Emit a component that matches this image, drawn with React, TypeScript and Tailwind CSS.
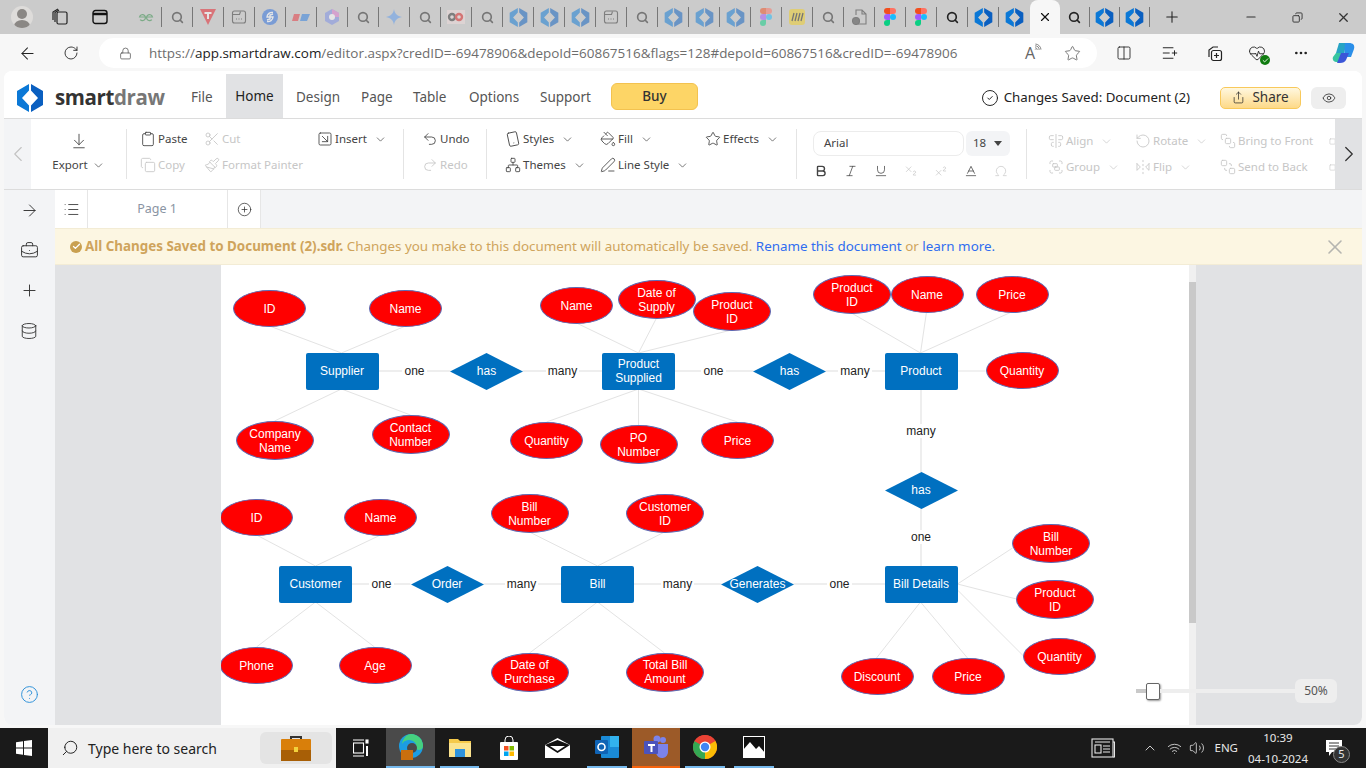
import React from "react";
import {
  ArrowLeft, RotateCw, Lock, Search, Star, Plus, X, Minus, MoreHorizontal, ChevronDown, ChevronLeft, ChevronRight,
  ArrowDownToLine, Clipboard, Scissors, Copy, Paintbrush, SquareArrowDownRight, Undo2, Redo2, Smartphone, Network, PaintBucket, PenLine,
  Bold, Italic, Underline, Subscript, Superscript, Baseline, Omega, AlignCenterVertical, RotateCcw, Group, FlipHorizontal2, BringToFront, SendToBack,
  CircleCheck, Share, Eye, List, CirclePlus, ArrowRight, BriefcaseBusiness, Database, CircleHelp, Columns2, ListPlus, Plus as PlusIcon, HeartPulse, Wifi, Volume2, ChevronUp, Check, Copy as CopyIcon, Square,
} from "lucide-react";

const Logo = ({ s = 20 }: { s?: number }) => (
  <svg width={s} height={s} viewBox="0 0 28 28">
    <polygon points="13,0 1,7 1,21 13,28 13,21.500 6,14 13,6.500" fill="#0b78d6" />
    <polygon points="15,0 27,7 27,21 15,28 15,21.500 22,14 15,6.500" fill="#0a5fc0" />
  </svg>
);

const WinDots = () => (
  <svg width="16" height="16" viewBox="0 0 16 16" fill="none" stroke="#333" strokeWidth="1.100">
    <rect x="1.500" y="2" width="13" height="12" rx="2" />
    <path d="M1.500 5.500h7l1-3" />
    <path d="M5 10h1M7.500 10h1M10 10h1" />
  </svg>
);

const Figma = () => (
  <svg width="12" height="18" viewBox="0 0 12 18">
    <path d="M0 3a3 3 0 0 1 3-3h3v6H3a3 3 0 0 1-3-3z" fill="#f24e1e" />
    <path d="M6 0h3a3 3 0 0 1 0 6H6z" fill="#ff7262" />
    <path d="M0 9a3 3 0 0 1 3-3h3v6H3a3 3 0 0 1-3-3z" fill="#a259ff" />
    <circle cx="9" cy="9" r="3" fill="#1abcfe" />
    <path d="M0 15a3 3 0 0 1 3-3h3v3a3 3 0 0 1-6 0z" fill="#0acf83" />
  </svg>
);

const tabIcon = (k: string) => {
  switch (k) {
    case "s": return <Search size={13} strokeWidth={3} color="#222" />;
    case "d": return <Logo s={19} />;
    case "w": return <WinDots />;
    case "f": return <Figma />;
    case "g": return (
      <svg width="16" height="10" viewBox="0 0 16 10" fill="none" stroke="#2f8d46" strokeWidth="1.200">
        <path d="M8 5H1.500a3 3 0 1 1 .7 2.600M8 5h6.500a3 3 0 1 0-.7 2.600" />
      </svg>
    );
    case "t": return (
      <svg width="16" height="16" viewBox="0 0 16 16">
        <polygon points="0,0 16,0 8,16" fill="#e8202a" />
        <path d="M4.500 3h7v2H9v5H7V5H4.500z" fill="#fff" />
      </svg>
    );
    case "b": return (
      <svg width="16" height="16" viewBox="0 0 16 16">
        <circle cx="8" cy="8" r="8" fill="#2b6fe0" />
        <path d="M11 3.500a5 5 0 0 0-6 4.500h3v-2l3-1M5 12.500a5 5 0 0 0 6-4.500H8v2l-3 1" fill="none" stroke="#fff" strokeWidth="1.400" />
      </svg>
    );
    case "p": return (
      <svg width="18" height="8" viewBox="0 0 18 8">
        <polygon points="2,1 8,1 6,8 0,8" fill="#e8333c" />
        <polygon points="10,1 18,1 15,8 8,8" fill="#2a7de1" />
      </svg>
    );
    case "c": return (
      <svg width="16" height="16" viewBox="0 0 16 16">
        <polygon points="8,0 15,4 15,12 8,16 1,12 1,4" fill="#7a8fe8" />
        <polygon points="8,0 15,4 15,8 8,8" fill="#e07ad0" />
        <circle cx="8" cy="8" r="3" fill="#fff" />
      </svg>
    );
    case "m": return (
      <svg width="16" height="16" viewBox="0 0 16 16">
        <path d="M8 0c.6 4.500 3 7 8 8-5 1-7.400 3.500-8 8-.6-4.500-3-7-8-8 5-1 7.400-3.500 8-8z" fill="#5b9bf0" />
      </svg>
    );
    case "l": return (
      <svg width="18" height="14" viewBox="0 0 18 14" fill="none" strokeWidth="2.400">
        <rect x="0" y="0" width="18" height="14" fill="#f0dcdc" />
        <circle cx="5" cy="7" r="3" stroke="#333" />
        <circle cx="12" cy="7" r="3" stroke="#d22" />
      </svg>
    );
    case "r": return (
      <svg width="16" height="16" viewBox="0 0 16 16">
        <rect width="16" height="16" rx="3" fill="#f4d021" />
        <path d="M5 4l-2 8M8 4l-2 8M11 4l-2 8M14 4l-2 8" stroke="#222" strokeWidth="1.300" />
      </svg>
    );
    case "x": return (
      <svg width="15" height="16" viewBox="0 0 15 16" fill="none" stroke="#333" strokeWidth="1.100">
        <path d="M4 6V1h6l4 4v10H6M10 1v4h4" />
        <circle cx="4" cy="12" r="3.500" fill="#444" />
      </svg>
    );
    default: return null;
  }
};

const tabs = ["g","s","t","w","b","p","c","s","m","s","l","s","d","d","d","w","s","d","d","d","f","r","s","x","f","f","s","d","d","A","s","d","d"];

const TabStrip = () => (
  <div className="flex h-[34px] bg-[#cbcbcb] items-center">
    <div className="w-[131px] flex items-center shrink-0">
      <div className="ml-[11px] w-[22px] h-[22px] rounded-full bg-[#dedcda] flex items-end justify-center overflow-hidden">
        <svg width="18" height="20" viewBox="0 0 18 20"><circle cx="9" cy="6" r="5" fill="#8a8784" /><ellipse cx="9" cy="18" rx="8" ry="6" fill="#8a8784" /></svg>
      </div>
      <svg className="ml-[18px]" width="18" height="18" viewBox="0 0 18 18" fill="none" stroke="#222" strokeWidth="1.200">
        <rect x="6" y="4" width="10" height="12" rx="1.500" /><path d="M4 14V4.500L8 2M2 12V4l5-3" />
      </svg>
      <svg className="ml-[23px]" width="16" height="16" viewBox="0 0 16 16" fill="none" stroke="#111" strokeWidth="1.400">
        <rect x="1" y="1.500" width="14" height="13" rx="2.500" /><path d="M1 5h14" strokeWidth="2.500" />
      </svg>
    </div>
    {tabs.map((k, i) =>
      k === "A" ? (
        <div key={i} className="w-[30px] h-[34px] shrink-0 bg-[#f7f7f7] rounded-t-lg flex items-center justify-center">
          <X size={14} color="#111" />
        </div>
      ) : (
        <div key={i} className={i > 29 ? "w-[30px] h-[34px] shrink-0 flex items-center" : "w-[31px] h-[34px] shrink-0 flex items-center"}>
          <div className={i < 24 ? "w-[30px] flex justify-center opacity-50" : i > 29 ? "w-[29px] flex justify-center" : "w-[30px] flex justify-center"}>{tabIcon(k)}</div>
          {tabs[i + 1] !== "A" && <div className="w-px h-[20px] bg-[#777]" />}
        </div>
      )
    )}
    <Plus size={18} color="#222" strokeWidth={1.400} className="ml-[13px] shrink-0" />
    <div className="ml-auto flex items-center shrink-0">
      <div className="w-[46px] flex justify-center"><Minus size={14} color="#333" /></div>
      <div className="w-[46px] flex justify-center"><CopyIcon size={11} color="#333" className="-scale-x-100" /></div>
      <div className="w-[46px] flex justify-center"><X size={15} color="#333" /></div>
    </div>
  </div>
);

const AddressBar = () => (
  <div className="flex h-[34px] bg-[#f7f7f7] items-center pt-[4px]">
    <ArrowLeft size={19} color="#222" strokeWidth={1.300} className="ml-[18px] shrink-0" />
    <RotateCw size={16} color="#222" strokeWidth={1.300} className="ml-[26px] shrink-0" />
    <div className="ml-[20px] w-[998px] h-[30px] rounded-full bg-white flex items-center shrink-0">
      <Lock size={13} color="#555" strokeWidth={1.400} className="ml-[20px] shrink-0" />
      <div className="ml-[17px] text-[13.480px] text-[#6d6d6d] whitespace-nowrap font-['Open_Sans',sans-serif]">
        https://<span className="text-[#1b1b1b]">app.smartdraw.com</span>/editor.aspx?credID=-69478906&amp;depoId=60867516&amp;flags=128#depoId=60867516&amp;credID=-69478906
      </div>
      <div className="ml-auto flex items-center">
        <span className="text-[16px] text-[#666] font-['Open_Sans',sans-serif] relative">A<Wifi size={9} color="#666" className="absolute -right-[7px] top-[2px] rotate-45" /></span>
        <Star size={17} color="#666" strokeWidth={1.200} className="ml-[29px] mr-[16px]" />
      </div>
    </div>
    <Columns2 size={16} color="#222" strokeWidth={1.300} className="ml-[19px] shrink-0" />
    <ListPlus size={18} color="#222" strokeWidth={1.300} className="ml-[29px] shrink-0" />
    <svg className="ml-[27px] shrink-0" width="17" height="17" viewBox="0 0 17 17" fill="none" stroke="#222" strokeWidth="1.200"><path d="M3 12V5l4-3h5" /><rect x="5.500" y="5.500" width="10" height="10" rx="2" /><path d="M10.500 8v5M8 10.500h5" /></svg>
    <div className="ml-[25px] relative shrink-0">
      <HeartPulse size={18} color="#222" strokeWidth={1.200} />
      <div className="absolute -right-[4px] -bottom-[3px] w-[10px] h-[10px] rounded-full bg-[#107c10] flex items-center justify-center"><Check size={7} color="#fff" strokeWidth={3} /></div>
    </div>
    <MoreHorizontal size={16} color="#222" className="ml-[27px] shrink-0" />
    <svg className="ml-[23px] shrink-0" width="24" height="24" viewBox="0 0 24 24">
      <path d="M7 2h8l-3 10H4z" fill="#27a4c4" /><path d="M13 2h4c4 0 6 2 5 6l-3 8h-7z" fill="#2b8fe9" /><path d="M4 12h6l-1 9H5c-3 0-5-2-4-5z" fill="#37c5a0" /><path d="M9 12h8l-3 7c-1 2-3 3-6 3H5z" fill="#3b56d8" />
    </svg>
  </div>
);

const Item = ({ icon, label, dis, chev, w }: { icon: React.ReactNode; label: string; dis?: boolean; chev?: boolean; w: string }) => (
  <div className={`flex items-center h-[26px] gap-[2px] ${w} ${dis ? "text-[#c6c6c6]" : "text-[#444]"}`}>
    <span className="w-[16px] flex justify-center shrink-0">{icon}</span>
    <span className="text-[11.500px] whitespace-nowrap">{label}</span>
    {chev && <ChevronDown size={13} strokeWidth={1.300} className="ml-[5px] shrink-0" />}
  </div>
);
const Divider = () => <div className="w-px h-[50px] bg-[#e4e4e4] self-center shrink-0" />;
const I = { size: 16, strokeWidth: 1.300 };

const Ribbon = () => (
  <div className="flex h-[72px] border-y border-[#dcdcdc] bg-white items-stretch font-['Noto_Sans',sans-serif]">
    <div className="w-[27px] bg-[#f3f4f6] flex items-center justify-center shrink-0">
      <ChevronLeft size={26} color="#c2c2c2" strokeWidth={1} />
    </div>
    <div className="w-[95px] flex flex-col items-center justify-center shrink-0 text-[#444] pb-[2px]">
      <ArrowDownToLine size={18} strokeWidth={1.200} />
      <div className="mt-[6px] flex items-center text-[11.500px]">Export<ChevronDown size={13} strokeWidth={1.300} className="ml-[4px]" /></div>
    </div>
    <Divider />
    <div className="w-[276px] pl-[13px] pb-[4px] flex flex-col justify-center shrink-0">
      <div className="flex">
        <Item w="w-[64px]" icon={<Clipboard {...I} />} label="Paste" />
        <Item w="w-[113px]" dis icon={<Scissors {...I} />} label="Cut" />
        <Item w="w-[80px]" chev icon={<SquareArrowDownRight {...I} />} label="Insert" />
      </div>
      <div className="flex">
        <Item w="w-[64px]" dis icon={<Copy {...I} />} label="Copy" />
        <Item w="w-[113px]" dis icon={<Paintbrush {...I} />} label="Format Painter" />
      </div>
    </div>
    <Divider />
    <div className="w-[82px] pl-[18px] pb-[4px] flex flex-col justify-center shrink-0">
      <Item w="w-[60px]" icon={<Undo2 {...I} />} label="Undo" />
      <Item w="w-[60px]" dis icon={<Redo2 {...I} />} label="Redo" />
    </div>
    <Divider />
    <div className="w-[309px] pl-[18px] pb-[4px] flex flex-col justify-center shrink-0">
      <div className="flex">
        <Item w="w-[95px]" chev icon={<Smartphone {...I} className="-rotate-12" />} label="Styles" />
        <Item w="w-[105px]" chev icon={<PaintBucket {...I} />} label="Fill" />
        <Item w="w-[90px]" chev icon={<Star {...I} />} label="Effects" />
      </div>
      <div className="flex">
        <Item w="w-[95px]" chev icon={<Network {...I} />} label="Themes" />
        <Item w="w-[105px]" chev icon={<PenLine {...I} />} label="Line Style" />
      </div>
    </div>
    <Divider />
    <div className="w-[229px] pl-[16px] flex flex-col justify-center shrink-0 text-[#444]">
      <div className="flex items-center gap-[2px]">
        <div className="w-[151px] h-[25px] border border-[#ececec] rounded-lg flex items-center pl-[10px] text-[11.500px]">Arial</div>
        <div className="w-[44px] h-[25px] bg-[#f3f4f6] rounded-md flex items-center pl-[7px] text-[11.500px]">18<svg className="ml-[8px]" width="8" height="5" viewBox="0 0 8 5"><polygon points="0,0 8,0 4,5" fill="#444" /></svg></div>
      </div>
      <div className="flex items-center mt-[8px] pl-[1px]">
        <span className="w-[30px]"><Bold size={14} strokeWidth={2.400} /></span>
        <span className="w-[30px]"><Italic size={14} strokeWidth={1.300} /></span>
        <span className="w-[30px]"><Underline size={14} strokeWidth={1.300} /></span>
        <span className="w-[30px]"><Subscript size={14} strokeWidth={1.200} color="#c6c6c6" /></span>
        <span className="w-[30px]"><Superscript size={14} strokeWidth={1.200} color="#c6c6c6" /></span>
        <span className="w-[30px]"><Baseline size={14} strokeWidth={1.300} /></span>
        <span className="w-[30px]"><Omega size={14} strokeWidth={1.200} color="#c6c6c6" /></span>
      </div>
    </div>
    <Divider />
    <div className="flex-1 pl-[21px] flex flex-col justify-center overflow-hidden">
      <div className="flex">
        <Item w="w-[87px] shrink-0" dis chev icon={<AlignCenterVertical {...I} />} label="Align" />
        <Item w="w-[85px] shrink-0" dis chev icon={<RotateCcw {...I} />} label="Rotate" />
        <Item w="w-[109px] shrink-0" dis icon={<BringToFront {...I} />} label="Bring to Front" />
        <Square size={7} color="#c6c6c6" className="self-center shrink-0" />
      </div>
      <div className="flex">
        <Item w="w-[87px] shrink-0" dis chev icon={<Group {...I} />} label="Group" />
        <Item w="w-[85px] shrink-0" dis chev icon={<FlipHorizontal2 {...I} />} label="Flip" />
        <Item w="w-[109px] shrink-0" dis icon={<SendToBack {...I} />} label="Send to Back" />
        <Square size={7} color="#c6c6c6" className="self-center shrink-0" />
      </div>
    </div>
    <div className="w-[27px] bg-[#e1e2e4] flex items-center justify-center shrink-0">
      <ChevronRight size={26} color="#333" strokeWidth={1.200} />
    </div>
  </div>
);

const Header = () => (
  <div className="flex h-[47px] items-stretch bg-white font-['Noto_Sans',sans-serif] text-[13.500px] text-[#555]">
    <div className="ml-[12px] w-[167px] flex items-center shrink-0 pt-[6px]">
      <Logo s={28} />
      <span className="ml-[11px] text-[20.500px] font-bold tracking-[-0.4px] text-[#333] font-['Open_Sans',sans-serif]">smart<span className="text-[#777]">draw</span></span>
    </div>
    <div className="flex items-center pt-[6px] w-[43px] pl-[8px] shrink-0">File</div>
    <div className="mt-[3px] bg-[#e1e2e4] w-[57px] flex items-center justify-center text-[#222] shrink-0">Home</div>
    <div className="flex items-center pt-[6px] pl-[13px] w-[70px] shrink-0">Design</div>
    <div className="flex items-center pt-[6px] pl-[8px] w-[51px] shrink-0">Page</div>
    <div className="flex items-center pt-[6px] pl-[9px] w-[57px] shrink-0">Table</div>
    <div className="flex items-center pt-[6px] pl-[8px] w-[71px] shrink-0">Options</div>
    <div className="flex items-center pt-[6px] pl-[8px] w-[79px] shrink-0">Support</div>
    <div className="self-start mt-[12px] w-[87px] h-[27px] bg-[#fdd566] border border-[#f3c24f] rounded-md flex items-center justify-center text-[#333] font-medium shrink-0">Buy</div>
    <div className="ml-auto flex items-center pt-[6px] shrink-0 text-[#222]">
      <CircleCheck size={18} strokeWidth={1.300} />
      <span className="ml-[5px] text-[13.300px]">Changes Saved: Document (2)</span>
      <div className="ml-[30px] w-[81px] h-[22px] rounded-[5px] border border-[#f8c95b] bg-[linear-gradient(#fff7df,#fdd988)] flex items-center justify-center gap-[7px]">
        <Share size={13} strokeWidth={1.300} /><span className="text-[#333]">Share</span>
      </div>
      <div className="ml-[10px] mr-[16px] w-[35px] h-[22px] rounded-md bg-[#eeeeee] flex items-center justify-center">
        <Eye size={14} strokeWidth={1.300} />
      </div>
    </div>
  </div>
);

type N = { t: string; x: number; y: number; k: "e" | "E" | "r" | "d" | "l" };
const nodes: N[] = [
  { t: "ID", x: 270, y: 308.500, k: "e" }, { t: "Name", x: 406, y: 308.500, k: "e" }, { t: "Name", x: 577, y: 305.500, k: "e" },
  { t: "Quantity", x: 547, y: 440.500, k: "e" }, { t: "Price", x: 738, y: 440.500, k: "e" }, { t: "Name", x: 927.500, y: 294.500, k: "e" },
  { t: "Price", x: 1012.500, y: 294.500, k: "e" }, { t: "Quantity", x: 1022.500, y: 370.500, k: "e" }, { t: "ID", x: 257, y: 517.500, k: "e" },
  { t: "Name", x: 381, y: 517.500, k: "e" }, { t: "Phone", x: 257, y: 665.500, k: "e" }, { t: "Age", x: 375.500, y: 665.500, k: "e" },
  { t: "Discount", x: 877.500, y: 676.500, k: "e" }, { t: "Price", x: 968.500, y: 676.500, k: "e" }, { t: "Quantity", x: 1060, y: 656.500, k: "e" },
  { t: "Company\nName", x: 275.500, y: 440.500, k: "E" }, { t: "Contact\nNumber", x: 411, y: 434.500, k: "E" }, { t: "Date of\nSupply", x: 657, y: 299.500, k: "E" },
  { t: "Product\nID", x: 732.500, y: 311.500, k: "E" }, { t: "PO\nNumber", x: 639, y: 444.500, k: "E" }, { t: "Product\nID", x: 852.500, y: 294.500, k: "E" },
  { t: "Bill\nNumber", x: 530, y: 513.500, k: "E" }, { t: "Customer\nID", x: 665.500, y: 513.500, k: "E" }, { t: "Date of\nPurchase", x: 530, y: 672, k: "E" },
  { t: "Total Bill\nAmount", x: 665.500, y: 672, k: "E" }, { t: "Bill\nNumber", x: 1051.500, y: 543.500, k: "E" }, { t: "Product\nID", x: 1055.500, y: 599.500, k: "E" },
  { t: "Supplier", x: 342.500, y: 371, k: "r" }, { t: "Product\nSupplied", x: 639, y: 371, k: "r" }, { t: "Product", x: 921.500, y: 371, k: "r" },
  { t: "Customer", x: 316, y: 584, k: "r" }, { t: "Bill", x: 598, y: 584, k: "r" }, { t: "Bill Details", x: 921.500, y: 584, k: "r" },
  { t: "has", x: 487, y: 371, k: "d" }, { t: "has", x: 790, y: 371, k: "d" }, { t: "has", x: 921.500, y: 490, k: "d" },
  { t: "Order", x: 447.500, y: 584, k: "d" }, { t: "Generates", x: 758, y: 584, k: "d" },
  { t: "one", x: 415, y: 371, k: "l" }, { t: "many", x: 563, y: 371, k: "l" }, { t: "one", x: 714, y: 371, k: "l" }, { t: "many", x: 855.500, y: 371, k: "l" },
  { t: "many", x: 921.500, y: 431, k: "l" }, { t: "one", x: 921.500, y: 537, k: "l" }, { t: "one", x: 382, y: 584, k: "l" }, { t: "many", x: 522, y: 584, k: "l" },
  { t: "many", x: 678, y: 584, k: "l" }, { t: "one", x: 840, y: 584, k: "l" },
];
const thin = [
  [270,326,342,353],[406,326,342,353],[275,421,342,389],[411,415,342,389],
  [577,323,639,353],[657,318,639,353],[732,330,639,353],[547,422,639,389],[639,425,639,389],[738,422,639,389],
  [852,313,921,353],[927,312,921,353],[1012,312,921,353],[958,371,986,371],
  [257,535,316,566],[381,535,316,566],[257,647,316,602],[375,647,316,602],
  [530,532,598,566],[665,532,598,566],[530,653,598,602],[665,653,598,602],
  [958,584,1013,548],[958,584,1017,599],[958,590,1024,656],[877,658,921,602],[968,658,921,602],
];
const thick = [[379,371,451,371],[523,371,603,371],[675,371,754,371],[826,371,886,371],[921.500,389,921.500,472],[921.500,508,921.500,566],[352,584,411,584],[484,584,562,584],[634,584,722,584],[794,584,886,584]];
const PX = 221.500, PY = 265;

const Node = ({ n }: { n: N }) => {
  const size = n.k === "E" ? [78, 39] : [73, 37];
  const base = "absolute flex items-center justify-center text-center whitespace-pre-line text-[12px] leading-[14px] font-['Liberation_Sans',sans-serif]";
  const style = { left: n.x - PX - size[0] / 2, top: n.y - PY - size[1] / 2, width: size[0], height: size[1] };
  if (n.k === "e" || n.k === "E")
    return <div style={style} className={`${base} text-white bg-[#ff0000] border border-[#5b6bb5] rounded-[50%]`}>{n.t}</div>;
  if (n.k === "r")
    return <div style={style} className={`${base} text-white bg-[#0070c0] rounded-[2px]`}>{n.t}</div>;
  if (n.k === "d")
    return (
      <div style={style} className={`${base} text-white`}>
        <svg className="absolute inset-0" width="73" height="37" viewBox="0 0 73 37"><polygon points="0,18.500 36.500,0 73,18.500 36.500,37" fill="#0070c0" /></svg>
        <span className="relative">{n.t}</span>
      </div>
    );
  return <div style={style} className={`${base} text-[#222]`}><span className="bg-white px-[2px]">{n.t}</span></div>;
};

const Canvas = () => (
  <div className="flex-1 relative bg-[#e1e2e4] flex overflow-hidden min-h-0">
    <div className="ml-[166px] w-[968px] h-full bg-white relative overflow-hidden shrink-0">
      <svg className="absolute inset-0" width="968" height="460">
        {thin.map((l, i) => <line key={i} x1={l[0] - PX} y1={l[1] - PY} x2={l[2] - PX} y2={l[3] - PY} stroke="#e3e3e3" strokeWidth="1" />)}
        {thick.map((l, i) => <line key={i} x1={l[0] - PX} y1={l[1] - PY} x2={l[2] - PX} y2={l[3] - PY} stroke="#eeeeee" strokeWidth="2" />)}
      </svg>
      {nodes.map((n, i) => <Node key={i} n={n} />)}
    </div>
    <div className="w-[7px] bg-[#f0f0f0] shrink-0 pt-[17px]"><div className="h-[341px] bg-[#c9c9c9]" /></div>
    <div className="absolute left-[1081px] top-[410px] w-[201px] h-[32px] flex items-center">
      <div className="w-[10px] h-[4px] bg-[#c9c9c9]" />
      <div className="w-[14px] h-[17px] bg-white border border-[#666] rounded-[2px] shadow-[1px_1px_2px_rgba(0,0,0,.4)] shrink-0" />
      <div className="w-[135px] h-[4px] bg-[#eeeeee]" />
      <div className="w-[42px] h-[24px] bg-[#eeeeee] rounded-md text-[12px] text-[#555] flex items-center justify-center font-['Noto_Sans',sans-serif]">50%</div>
    </div>
  </div>
);

const Sidebar = () => (
  <div className="w-[51px] bg-[#f3f4f6] flex flex-col items-center shrink-0 pt-[11px] text-[#333] pr-[1px]">
    <ArrowRight size={19} strokeWidth={1.200} />
    <BriefcaseBusiness size={19} strokeWidth={1.200} className="mt-[21px]" />
    <PlusIcon size={19} strokeWidth={1.200} className="mt-[21px]" />
    <Database size={18} strokeWidth={1.200} className="mt-[22px]" />
    <CircleHelp size={19} strokeWidth={1.200} color="#2b8fd8" className="mt-auto mb-[21px]" />
  </div>
);

const Main = () => (
  <div className="flex-1 flex min-h-0">
    <Sidebar />
    <div className="flex-1 flex flex-col min-w-0">
      <div className="h-[38px] flex bg-[#f3f4f6] font-['Noto_Sans',sans-serif] shrink-0">
        <div className="w-[33px] bg-white border-r border-[#e6e6e6] flex items-center justify-center"><List size={17} strokeWidth={1.200} color="#333" /></div>
        <div className="w-[140px] bg-white border-r border-[#e6e6e6] flex items-center justify-center text-[12.500px] text-[#8a94a3] pr-[1px]">Page 1</div>
        <div className="w-[33px] bg-white border-r border-[#e6e6e6] flex items-center justify-center"><CirclePlus size={15} strokeWidth={1.200} color="#333" /></div>
      </div>
      <div className="h-[37px] bg-[#fcf6e2] border-y border-[#f3ecd5] flex items-center pl-[15px] text-[13.400px] text-[#cfa45c] shrink-0 font-['Noto_Sans',sans-serif] whitespace-nowrap">
        <div className="w-[12px] h-[12px] rounded-full bg-[#c9a050] flex items-center justify-center mr-[3px]"><Check size={9} strokeWidth={3.500} color="#fff" /></div>
        <b>All Changes Saved to Document (2).sdr.</b>&nbsp;Changes you make to this document will automatically be saved.&nbsp;<span className="text-[#2f6df0]">Rename this document</span>&nbsp;or&nbsp;<span className="text-[#2f6df0]">learn more.</span>
        <X size={24} strokeWidth={1.600} color="#b5b5b0" className="ml-auto mr-[15px]" />
      </div>
      <Canvas />
    </div>
  </div>
);

const TaskIcon = ({ children, cls }: { children: React.ReactNode; cls: string }) => (
  <div className={`h-full flex items-center justify-center shrink-0 ${cls}`}>{children}</div>
);

const Taskbar = () => (
  <div className="h-[40px] bg-[#1a1a1a] flex items-stretch text-white font-['Noto_Sans',sans-serif]">
    <div className="w-[48px] flex items-center justify-center shrink-0">
      <svg width="16" height="16" viewBox="0 0 16 16" fill="#fff"><polygon points="0,2.300 7,1.300 7,7.500 0,7.500" /><polygon points="8,1.100 16,0 16,7.500 8,7.500" /><polygon points="0,8.500 7,8.500 7,14.700 0,13.700" /><polygon points="8,8.500 16,8.500 16,16 8,14.900" /></svg>
    </div>
    <div className="w-[288px] bg-[#f0f0f0] flex items-center shrink-0 text-[#222]">
      <Search size={18} strokeWidth={1.300} className="ml-[13px] -scale-x-100" />
      <span className="ml-[9px] text-[14px]">Type here to search</span>
      <div className="ml-auto mr-[4px] w-[72px] h-[32px] rounded-md bg-[#e4e4e4] flex items-center justify-center">
        <svg width="30" height="26" viewBox="0 0 30 26"><path d="M10 5V2h10v3" fill="none" stroke="#333" strokeWidth="2" /><rect y="4" width="30" height="22" rx="1" fill="#d97f0a" /><rect y="15" width="30" height="11" fill="#a85f06" /><rect x="13" y="12" width="4" height="5" fill="#f2d23c" /></svg>
      </div>
    </div>
    <TaskIcon cls="w-[50px]">
      <svg width="16" height="18" viewBox="0 0 16 18" fill="none" stroke="#fff" strokeWidth="1.100"><path d="M0 1h11M0 17h11" /><rect x="0.500" y="4" width="10" height="10" /><rect x="13" y="1" width="2" height="3" fill="#fff" /><path d="M14 7v10" strokeWidth="2" /></svg>
    </TaskIcon>
    <TaskIcon cls="w-[49px] bg-[#4a4a4a] border-b-2 border-[#76b9ed]">
      <svg width="26" height="26" viewBox="0 0 26 26"><circle cx="13" cy="12" r="12" fill="#1b9de2" /><path d="M13 0a12 12 0 0 1 12 12c0 4-4 5-7 3 2-7-5-11-11-8-1 0-2 2-3 3C5 4 9 0 13 0z" fill="#46d17f" /><circle cx="14" cy="14" r="5" fill="#4a4a4a" /><rect x="3" y="16" width="12" height="10" fill="#c96f0d" /></svg>
    </TaskIcon>
    <TaskIcon cls="w-[39px] ml-[5px] border-b-2 border-[#76b9ed]">
      <svg width="22" height="20" viewBox="0 0 22 20"><path d="M0 2h9l2 2h11v16H0z" fill="#f5c94a" /><rect y="6" width="22" height="14" fill="#fbe38e" /><rect x="6" y="12" width="10" height="8" fill="#2f93dc" /></svg>
    </TaskIcon>
    <TaskIcon cls="w-[48px] ml-[6px]">
      <svg width="18" height="24" viewBox="0 0 18 24"><path d="M5 7V4a4 4 0 0 1 8 0v3" fill="none" stroke="#fff" /><rect y="6" width="18" height="18" rx="1" fill="#fff" /><rect x="4" y="10" width="4.500" height="4.500" fill="#f25022" /><rect x="9.500" y="10" width="4.500" height="4.500" fill="#7fba00" /><rect x="4" y="15.500" width="4.500" height="4.500" fill="#00a4ef" /><rect x="9.500" y="15.500" width="4.500" height="4.500" fill="#ffb900" /></svg>
    </TaskIcon>
    <TaskIcon cls="w-[49px]">
      <svg width="25" height="20" viewBox="0 0 25 20"><path d="M0 7 12.500 0 25 7v13H0z" fill="#fff" /><path d="M0 7l12.500 8L25 7l-12.500-5z" fill="#111" /><path d="M5 8h15l-7.500 5z" fill="#fff" /></svg>
    </TaskIcon>
    <TaskIcon cls="w-[40px] ml-[5px] border-b-2 border-[#76b9ed]">
      <svg width="24" height="22" viewBox="0 0 24 22"><rect x="6" y="0" width="18" height="22" rx="1" fill="#1a8ad6" /><rect x="15" y="0" width="9" height="11" fill="#32b2ee" /><rect y="4" width="13" height="14" rx="1" fill="#0f63b5" /><circle cx="6.500" cy="11" r="3.500" fill="none" stroke="#fff" strokeWidth="1.600" /></svg>
    </TaskIcon>
    <TaskIcon cls="w-[48px] ml-[5px] bg-[#9c5a28] border-b-2 border-[#f7630c]">
      <svg width="25" height="24" viewBox="0 0 25 24"><circle cx="19" cy="5" r="3" fill="#7b83eb" /><circle cx="13" cy="4" r="3.500" fill="#7b83eb" /><path d="M8 9h16v7a6 6 0 0 1-12 2H8z" fill="#7b83eb" /><rect y="6" width="14" height="13" rx="1" fill="#4b53bc" /><path d="M4 9h7v2H8.500v6h-2v-6H4z" fill="#fff" /></svg>
    </TaskIcon>
    <TaskIcon cls="w-[40px] ml-[5px] border-b-2 border-[#76b9ed]">
      <svg width="24" height="24" viewBox="0 0 24 24"><circle cx="12" cy="12" r="12" fill="#ea4335" /><path d="M12 12 22.400 6A12 12 0 0 1 12 24z" fill="#fbbc05" /><path d="M12 12 12 24A12 12 0 0 1 1.600 18 12 12 0 0 1 1.600 6z" fill="#34a853" /><path d="M12 0a12 12 0 0 1 10.400 6H12a6 6 0 0 0-5.200 3L1.600 6A12 12 0 0 1 12 0z" fill="#ea4335" /><circle cx="12" cy="12" r="5.500" fill="#fff" /><circle cx="12" cy="12" r="4.200" fill="#4285f4" /></svg>
    </TaskIcon>
    <TaskIcon cls="w-[40px] ml-[9px] border-b-2 border-[#76b9ed]">
      <svg width="22" height="22" viewBox="0 0 22 22"><rect x="0.500" y="0.500" width="21" height="21" fill="#111" stroke="#fff" /><path d="M0 22V14L7 6l6 7 3-3 6 7v5z" fill="#fff" /></svg>
    </TaskIcon>
    <div className="ml-auto flex items-center shrink-0 text-[#e8e8e8]">
      <svg width="24" height="20" viewBox="0 0 24 20" fill="none" stroke="#e8e8e8" strokeWidth="1.100"><rect x="1" y="1" width="21" height="18" /><path d="M22 4h1.500v15H22" /><rect x="4" y="7" width="6" height="8" /><path d="M4 4h15M12 8h7M12 11h7M12 14h7" /></svg>
      <ChevronUp size={16} strokeWidth={1.300} className="ml-[27px]" />
      <Wifi size={15} strokeWidth={1.300} className="ml-[9px]" />
      <Volume2 size={16} strokeWidth={1.200} className="ml-[7px]" />
      <span className="ml-[9px] text-[11.500px]">ENG</span>
      <div className="ml-[9px] w-[62px] flex flex-col items-center text-[11.500px] leading-[21px]"><span>10:39</span><span>04-10-2024</span></div>
      <div className="ml-[17px] mr-[24px] relative">
        <svg width="16" height="17" viewBox="0 0 16 17"><path d="M0 0h16v12H6l-3 4v-4H0z" fill="#fff" /><path d="M3 3h10M3 6h10M3 9h7" stroke="#333" strokeWidth="1" /></svg>
        <div className="absolute -right-[8px] -bottom-[6px] w-[17px] h-[17px] rounded-full bg-[#333] border border-[#888] text-[11px] flex items-center justify-center">5</div>
      </div>
    </div>
  </div>
);

export default function App() {
  return (
    <div className="w-[1366px] h-[768px] flex flex-col overflow-hidden bg-[#f7f7f7]">
      <TabStrip />
      <AddressBar />
      <div className="flex-1 min-h-0 ml-[4px] mr-[4px] mt-[3px] mb-[3px] rounded-lg overflow-hidden bg-white flex flex-col">
        <Header />
        <Ribbon />
        <Main />
      </div>
      <Taskbar />
    </div>
  );
}
